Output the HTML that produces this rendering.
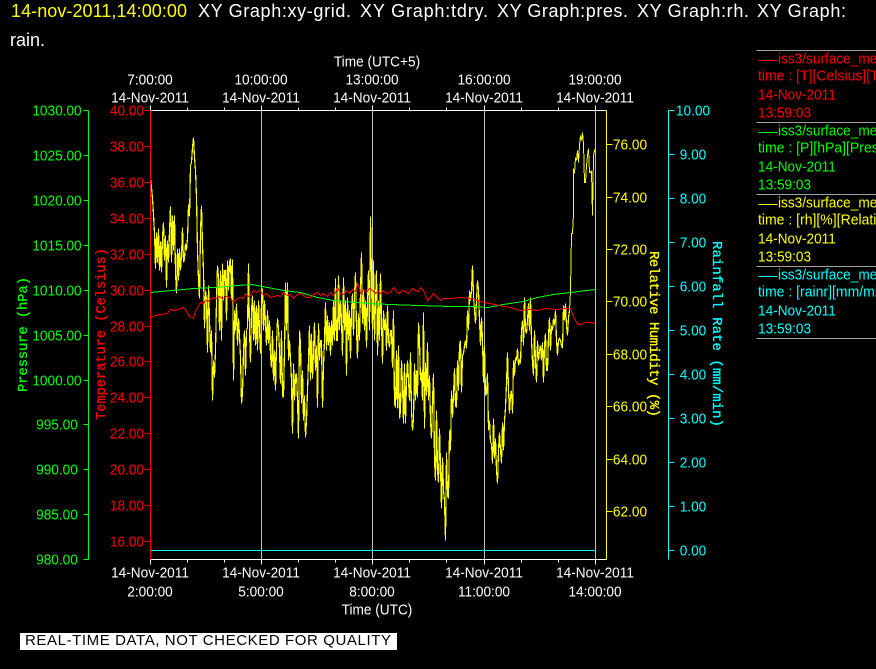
<!DOCTYPE html>
<html>
<head>
<meta charset="utf-8">
<title>XY Graph</title>
<style>
html,body{margin:0;padding:0;background:#000;width:876px;height:669px;overflow:hidden}
svg{display:block;position:absolute;left:0;top:0}
text{font-family:"Liberation Sans",sans-serif;font-size:15px;white-space:pre}
.s{transform-box:fill-box;transform-origin:center;transform:translateY(-.5px) scaleX(.91)}
.m{text-anchor:middle}
.lf{transform-origin:left center}
.tl{transform:translateY(-.5px) scaleX(.935)}
text.t{font-size:18px}
text.r{font-family:"Liberation Mono",monospace;font-size:14px;stroke-width:.3}
.w{fill:#fff}.g{fill:#0f0}.d{fill:#f00}.y{fill:#ff0}.c{fill:#0ff}
.l{fill:none;shape-rendering:crispEdges}
.n{fill:none;stroke-width:1;shape-rendering:crispEdges}
.b{fill:none;stroke-width:1.2;shape-rendering:crispEdges}
</style>
</head>
<body>
<svg width="876" height="669" viewBox="0 0 876 669" xmlns="http://www.w3.org/2000/svg">
<!-- title -->
<text class="t y" x="11" y="17" textLength="176" lengthAdjust="spacing">14-nov-2011,14:00:00</text>
<text class="t w" x="198" y="17" textLength="153" lengthAdjust="spacing">XY Graph:xy-grid.</text>
<text class="t w" x="360" y="17" textLength="128" lengthAdjust="spacing">XY Graph:tdry.</text>
<text class="t w" x="497" y="17" textLength="131" lengthAdjust="spacing">XY Graph:pres.</text>
<text class="t w" x="637" y="17" textLength="112" lengthAdjust="spacing">XY Graph:rh.</text>
<text class="t w" x="757" y="17" textLength="89" lengthAdjust="spacing">XY Graph:</text>
<text class="t w" x="10" y="46">rain.</text>

<g transform="translate(.5,.5)">
<!-- grid -->
<path class="l" stroke="#bebebe" d="M261 110V559M372 110V559M484 110V559M595 110V559"/>
<!-- yellow data -->
<polyline class="b" stroke="#ff0" points="150,178 151,187 152,198 153,214 154,233 155,268 156,232 157,262 158,228 159,270 160,241 161,272 162,236 163,222 164,260 165,235 166,287 167,240 168,262 169,230 170,206 171,262 172,215 173,250 174,215 175,272 176,293 177,248 178,280 179,248 180,270 181,255 182,227 183,262 184,258 185,243 186,250 187,238 188,204 189,216 190,165 191,162 192,147 193,137 194,157 195,170 196,197 197,250 198,280 199,298 200,230 201,205 202,245 203,270 204,328 205,290 206,300 207,352 208,285 209,320 210,352 211,330 212,400 213,360 214,377 215,350 216,300 217,265 218,277 219,330 220,270 221,340 222,263 223,300 224,270 225,270 226,320 227,260 228,290 229,262 230,258 231,300 232,259 233,380 234,310 235,330 236,303 237,345 238,318 239,335 240,357 241,403 242,393 243,350 244,330 245,375 246,330 247,327 248,263 249,330 250,362 251,310 252,295 253,340 254,300 255,345 256,305 257,350 258,300 259,330 260,353 261,300 262,288 263,330 264,300 265,323 266,345 267,310 268,343 269,320 270,355 271,367 272,330 273,380 274,350 275,390 276,345 277,318 278,328 279,350 280,383 281,330 282,395 283,397 284,350 285,282 286,330 287,282 288,360 289,340 290,358 291,380 292,433 293,363 294,400 295,375 296,373 297,400 298,438 299,330 300,343 301,403 302,370 303,420 304,395 305,437 306,420 307,390 308,360 309,325 310,380 311,333 312,378 313,350 314,322 315,370 316,345 317,407 318,323 319,360 320,340 321,340 322,407 323,365 324,340 325,302 326,350 327,315 328,345 329,322 330,355 331,320 332,345 333,300 334,340 335,278 336,340 337,340 338,275 339,330 340,300 341,320 342,355 343,277 344,330 345,300 346,375 347,297 348,340 349,310 350,358 351,310 352,293 353,335 354,295 355,272 356,330 357,358 358,313 359,340 360,290 361,252 362,323 363,290 364,330 365,300 366,347 367,300 368,270 369,330 370,216 371,280 372,330 373,260 374,340 375,300 376,270 377,355 378,300 379,340 380,273 381,320 382,363 383,310 384,330 385,318 386,350 387,305 388,340 389,347 390,330 391,330 392,367 393,310 394,403 395,407 396,350 397,408 398,345 399,418 400,410 401,360 402,383 403,423 404,363 405,423 406,380 407,360 408,380 409,400 410,352 411,410 412,430 413,418 414,363 415,400 416,370 417,397 418,322 419,340 420,380 421,372 422,400 423,312 424,428 425,362 426,395 427,342 428,400 429,375 430,420 431,438 432,400 433,373 434,460 435,480 436,410 437,470 438,482 439,428 440,465 441,508 442,457 443,490 444,500 445,540 446,452 447,495 448,498 449,430 450,450 451,390 452,417 453,395 454,368 455,405 456,407 457,360 458,390 459,345 460,340 461,392 462,355 463,353 464,345 465,340 466,348 467,310 468,330 469,290 470,300 471,290 472,265 473,295 474,310 475,323 476,300 477,280 478,290 479,320 480,345 481,317 482,340 483,382 484,345 485,395 486,393 487,373 488,430 489,420 490,442 491,443 492,463 493,418 494,458 495,438 496,470 497,483 498,450 499,432 500,450 501,463 502,422 503,450 504,420 505,407 506,383 507,352 508,390 509,413 510,395 511,390 512,413 513,360 514,375 515,357 516,360 517,348 518,365 519,360 520,363 521,330 522,320 523,345 524,297 525,330 526,333 527,320 528,303 529,330 530,297 531,340 532,362 533,375 534,330 535,360 536,382 537,340 538,360 539,350 540,345 541,360 542,342 543,382 544,345 545,333 546,370 547,370 548,335 549,317 550,350 551,325 552,330 553,318 554,325 555,310 556,340 557,355 558,340 559,338 560,340 561,345 562,348 563,305 564,320 565,303 566,325 567,335 568,317 569,310"/>
<polyline class="n" stroke="#ff0" points="569,310 570,290 571,233 572,233 573,213 573,168 574,173 575,157 576,160 577,150 578,162 579,145 580,135 581,140 582,132 583,143 584,182 585,182 586,165 587,155 588,148 589,172 590,172 591,170 592,215 593,155 594,150 595,148"/>
<!-- green data -->
<polyline class="n" stroke="#0f0" points="150,292 160,291 183,289 193,288 213,287 237,285 250,284 257,285 267,287 283,290 300,292 317,297 333,300 367,303 390,304 417,305 450,306 470,306 487,307 503,304 523,301 537,297 553,294 570,292 595,289"/>
<!-- red data -->
<polyline class="n" stroke="#f00" points="150,317 155,315 160,314 167,313 170,309 175,310 180,308 183,307 185,309 187,313 189,316 191,317 193,318 195,311 197,307 200,302 203,303 205,300 207,301 210,299 213,297 216,298 219,296 222,298 226,296 230,297 233,302 236,299 240,297 243,298 245,293 248,296 250,295 253,290 256,292 260,290 263,295 266,293 270,297 273,296 277,295 280,296 283,292 287,295 290,294 293,298 297,294 300,293 303,295 306,297 310,297 313,294 317,292 320,295 323,293 327,296 330,292 333,295 335,292 337,287 340,293 343,294 346,290 349,293 352,289 355,291 357,283 359,287 360,293 363,289 366,292 369,288 372,290 375,293 378,291 380,293 383,290 386,293 390,292 393,287 396,291 399,293 402,290 405,291 408,293 412,288 415,290 418,291 420,287 423,290 427,300 430,297 433,293 436,296 440,300 443,298 447,298 450,298 460,297 472,298 483,302 490,303 503,306 510,307 520,310 530,309 537,310 545,308 555,309 565,308 570,308 573,316 575,320 577,323 580,324 585,322 590,322 595,323"/>
<!-- cyan data -->
<path class="l" stroke="#0ff" d="M150 550H595"/>
<!-- white frame -->
<path class="l" stroke="#fff" d="M150 110H606M150 559H606M150 105V110M261 105V110M372 105V110M484 105V110M595 105V110M187 107V110M224 107V110M298 107V110M335 107V110M409 107V110M446 107V110M521 107V110M558 107V110M150 559V564M261 559V564M372 559V564M484 559V564M595 559V564M187 559V562M224 559V562M298 559V562M335 559V562M409 559V562M446 559V562M521 559V562M558 559V562"/>
<!-- axes -->
<path class="l" stroke="#0f0" d="M88 110V559M83 110H88M83 155H88M83 200H88M83 245H88M83 290H88M83 335H88M83 380H88M83 424H88M83 469H88M83 514H88M83 559H88"/>
<path class="l" stroke="#f00" d="M150 110V559M144 110H150M144 146H150M144 182H150M144 218H150M144 254H150M144 290H150M144 326H150M144 361H150M144 397H150M144 433H150M144 469H150M144 505H150M144 541H150"/>
<path class="l" stroke="#ff0" d="M606 110V559M606 144H612M606 197H612M606 249H612M606 301H612M606 354H612M606 406H612M606 459H612M606 511H612"/>
<path class="l" stroke="#0ff" d="M668 110V559M668 110H674M668 154H674M668 198H674M668 242H674M668 286H674M668 330H674M668 374H674M668 418H674M668 462H674M668 506H674M668 550H674"/>
<!-- legend rules -->
<path class="l" stroke="#a0a0a0" d="M756 50H876M756 122H876M756 194H876M756 266H876M756 338H876"/>
<path class="l" stroke="#f00" d="M758 60H777"/>
<path class="l" stroke="#0f0" d="M758 132H777"/>
<path class="l" stroke="#ff0" d="M758 204H777"/>
<path class="l" stroke="#0ff" d="M758 276H777"/>
</g>

<!-- top time axis labels -->
<text class="s m w" x="377" y="67">Time (UTC+5)</text>
<text class="s m w" x="150" y="85">7:00:00</text>
<text class="s m w" x="261" y="85">10:00:00</text>
<text class="s m w" x="372" y="85">13:00:00</text>
<text class="s m w" x="484" y="85">16:00:00</text>
<text class="s m w" x="595" y="85">19:00:00</text>
<text class="s m w" x="150" y="103">14-Nov-2011</text>
<text class="s m w" x="261" y="103">14-Nov-2011</text>
<text class="s m w" x="372" y="103">14-Nov-2011</text>
<text class="s m w" x="484" y="103">14-Nov-2011</text>
<text class="s m w" x="595" y="103">14-Nov-2011</text>
<!-- bottom time axis labels -->
<text class="s m w" x="150" y="578">14-Nov-2011</text>
<text class="s m w" x="261" y="578">14-Nov-2011</text>
<text class="s m w" x="372" y="578">14-Nov-2011</text>
<text class="s m w" x="484" y="578">14-Nov-2011</text>
<text class="s m w" x="595" y="578">14-Nov-2011</text>
<text class="s m w" x="150" y="597">2:00:00</text>
<text class="s m w" x="261" y="597">5:00:00</text>
<text class="s m w" x="372" y="597">8:00:00</text>
<text class="s m w" x="484" y="597">11:00:00</text>
<text class="s m w" x="595" y="597">14:00:00</text>
<text class="s m w" x="377" y="615">Time (UTC)</text>

<!-- pressure labels -->
<text class="s m g" x="57" y="116">1030.00</text>
<text class="s m g" x="57" y="161">1025.00</text>
<text class="s m g" x="57" y="206">1020.00</text>
<text class="s m g" x="57" y="251">1015.00</text>
<text class="s m g" x="57" y="296">1010.00</text>
<text class="s m g" x="57" y="341">1005.00</text>
<text class="s m g" x="57" y="386">1000.00</text>
<text class="s m g" x="57" y="430">995.00</text>
<text class="s m g" x="57" y="475">990.00</text>
<text class="s m g" x="57" y="520">985.00</text>
<text class="s m g" x="57" y="565">980.00</text>
<!-- temperature labels -->
<text class="s m d" x="127" y="116">40.00</text>
<text class="s m d" x="127" y="152">38.00</text>
<text class="s m d" x="127" y="188">36.00</text>
<text class="s m d" x="127" y="224">34.00</text>
<text class="s m d" x="127" y="260">32.00</text>
<text class="s m d" x="127" y="296">30.00</text>
<text class="s m d" x="127" y="332">28.00</text>
<text class="s m d" x="127" y="367">26.00</text>
<text class="s m d" x="127" y="403">24.00</text>
<text class="s m d" x="127" y="439">22.00</text>
<text class="s m d" x="127" y="475">20.00</text>
<text class="s m d" x="127" y="511">18.00</text>
<text class="s m d" x="127" y="547">16.00</text>
<!-- rh labels -->
<text class="s m y" x="630" y="150">76.00</text>
<text class="s m y" x="630" y="203">74.00</text>
<text class="s m y" x="630" y="255">72.00</text>
<text class="s m y" x="630" y="307">70.00</text>
<text class="s m y" x="630" y="360">68.00</text>
<text class="s m y" x="630" y="412">66.00</text>
<text class="s m y" x="630" y="465">64.00</text>
<text class="s m y" x="630" y="517">62.00</text>
<!-- rain labels -->
<text class="s m c" x="693" y="116">10.00</text>
<text class="s m c" x="693" y="160">9.00</text>
<text class="s m c" x="693" y="204">8.00</text>
<text class="s m c" x="693" y="248">7.00</text>
<text class="s m c" x="693" y="292">6.00</text>
<text class="s m c" x="693" y="336">5.00</text>
<text class="s m c" x="693" y="380">4.00</text>
<text class="s m c" x="693" y="424">3.00</text>
<text class="s m c" x="693" y="468">2.00</text>
<text class="s m c" x="693" y="512">1.00</text>
<text class="s m c" x="693" y="556">0.00</text>

<!-- rotated axis titles -->
<text class="r g" stroke="#0f0" transform="translate(27,392) rotate(-90)" textLength="115" lengthAdjust="spacing">Pressure (hPa)</text>
<text class="r d" stroke="#f00" transform="translate(105,420) rotate(-90)" textLength="172" lengthAdjust="spacing">Temperature (Celsius)</text>
<text class="r y" stroke="#ff0" transform="translate(650,251) rotate(90)" textLength="166" lengthAdjust="spacing">Relative Humidity (%)</text>
<text class="r c" stroke="#0ff" transform="translate(713,241) rotate(90)" textLength="186" lengthAdjust="spacing">Rainfall Rate (mm/min)</text>

<!-- legend -->
<text class="s d lf" x="778" y="64">iss3/surface_met</text>
<text class="s d lf tl" x="758" y="81">time : [T][Celsius][T</text>
<text class="s d lf" x="758" y="100">14-Nov-2011</text>
<text class="s d lf" x="758" y="118">13:59:03</text>
<text class="s g lf" x="778" y="136">iss3/surface_met</text>
<text class="s g lf tl" x="758" y="153">time : [P][hPa][Press</text>
<text class="s g lf" x="758" y="172">14-Nov-2011</text>
<text class="s g lf" x="758" y="190">13:59:03</text>
<text class="s y lf" x="778" y="208">iss3/surface_met</text>
<text class="s y lf tl" x="758" y="225">time : [rh][%][Relativ</text>
<text class="s y lf" x="758" y="244">14-Nov-2011</text>
<text class="s y lf" x="758" y="262">13:59:03</text>
<text class="s c lf" x="778" y="280">iss3/surface_met</text>
<text class="s c lf tl" x="758" y="297">time : [rainr][mm/min</text>
<text class="s c lf" x="758" y="316">14-Nov-2011</text>
<text class="s c lf" x="758" y="334">13:59:03</text>

<!-- footer box -->
<rect x="20" y="633" width="377" height="17" fill="#fff"/>
<text x="25" y="645" fill="#000" textLength="366" lengthAdjust="spacing">REAL-TIME DATA, NOT CHECKED FOR QUALITY</text>
</svg>
</body>
</html>
